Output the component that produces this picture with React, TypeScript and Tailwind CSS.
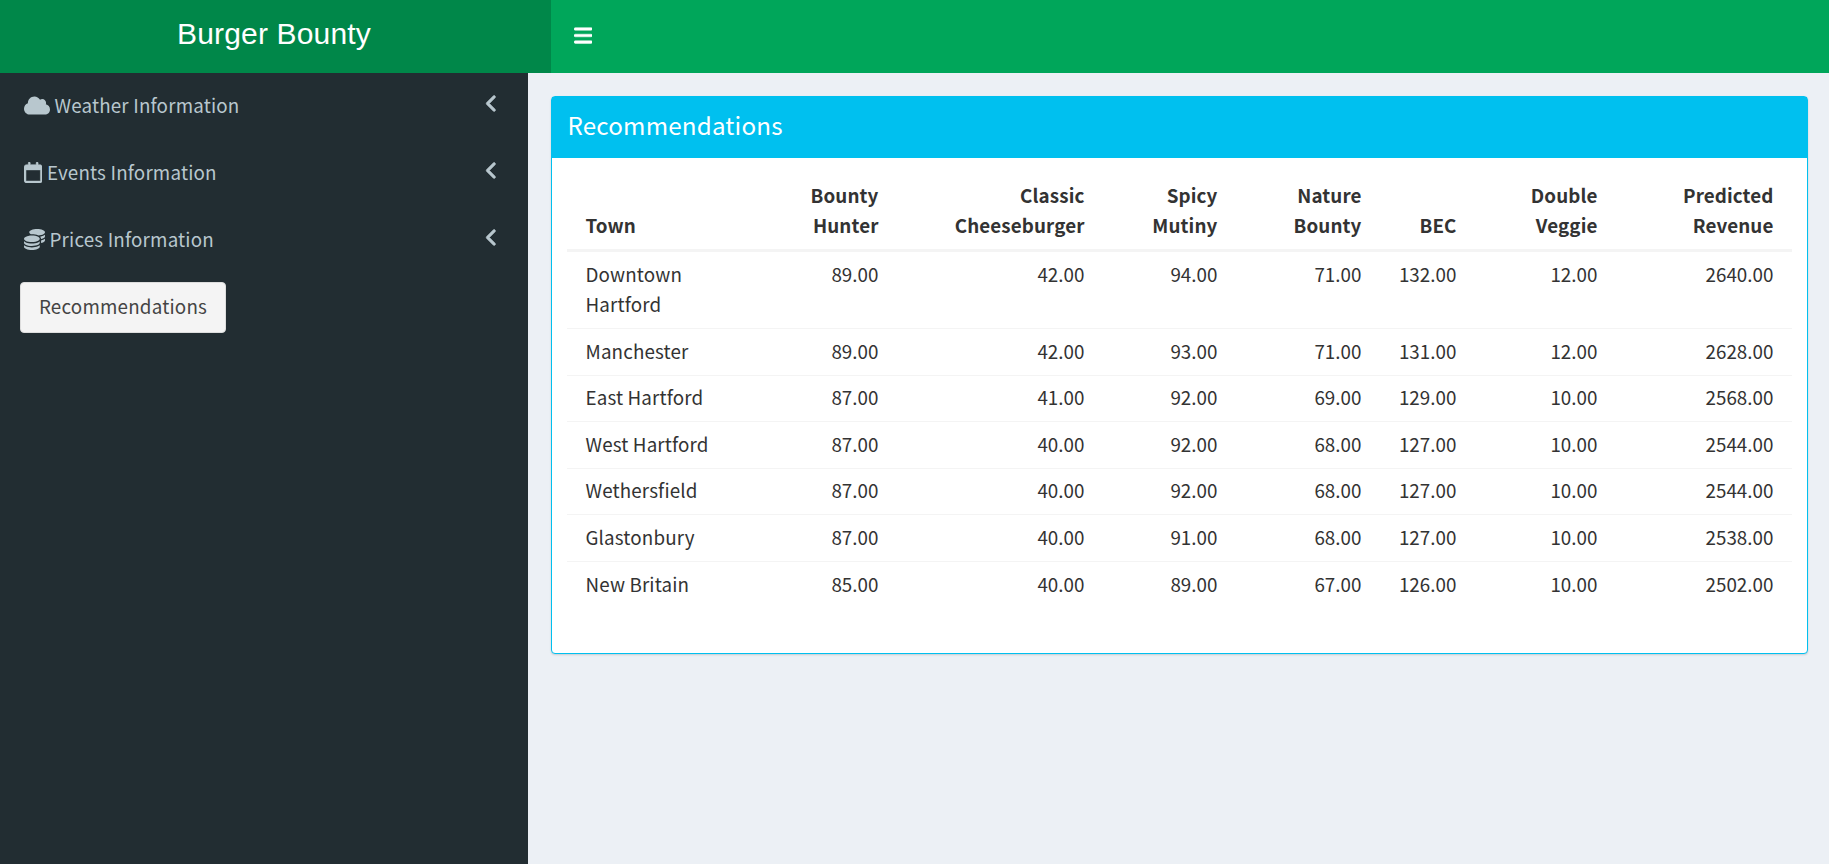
import type { ReactNode } from "react";
import { FaCloud, FaRegCalendar, FaCoins, FaAngleLeft, FaBars } from "react-icons/fa6";

const columns = [
  { lines: ["Town"], width: "w-[197px]" },
  { lines: ["Bounty", "Hunter"], width: "w-[133px]" },
  { lines: ["Classic", "Cheeseburger"], width: "w-[206px]" },
  { lines: ["Spicy", "Mutiny"], width: "w-[133px]" },
  { lines: ["Nature", "Bounty"], width: "w-[144px]" },
  { lines: ["BEC"], width: "w-[95px]" },
  { lines: ["Double", "Veggie"], width: "w-[141px]" },
  { lines: ["Predicted", "Revenue"], width: "w-[176px]" },
];

const rows: [string, number[]][] = [
  ["Downtown Hartford", [89, 42, 94, 71, 132, 12, 2640]],
  ["Manchester", [89, 42, 93, 71, 131, 12, 2628]],
  ["East Hartford", [87, 41, 92, 69, 129, 10, 2568]],
  ["West Hartford", [87, 40, 92, 68, 127, 10, 2544]],
  ["Wethersfield", [87, 40, 92, 68, 127, 10, 2544]],
  ["Glastonbury", [87, 40, 91, 68, 127, 10, 2538]],
  ["New Britain", [85, 40, 89, 67, 126, 10, 2502]],
];

function MenuItem({ icon, label }: { icon: ReactNode; label: string }) {
  return (
    <li className="flex h-[67px] items-center pb-[3px] pl-[23.5px] pr-[26px] text-[#b8c7ce]">
      <span className="mr-[5px]">{icon}</span>
      <span className="flex-1 whitespace-nowrap tracking-[0.18px]">{label}</span>
      <FaAngleLeft className="mb-[3px] size-[21px] stroke-current stroke-[16px]" />
    </li>
  );
}

function Sidebar() {
  return (
    <aside className="w-[528px] shrink-0 bg-[#222d32]">
      <ul>
        <MenuItem icon={<FaCloud className="h-[21px] w-[26px]" />} label="Weather Information" />
        <MenuItem icon={<FaRegCalendar className="h-[21px] w-[18.4px] stroke-current stroke-[12px]" />} label="Events Information" />
        <MenuItem icon={<FaCoins className="size-[21px]" />} label="Prices Information" />
      </ul>
      <button className="ml-5 mt-2 flex h-[51px] w-[206px] items-center justify-center rounded-[4px] border border-[#ddd] bg-[#f4f4f4] pb-[3px] tracking-[0.2px] text-[#444]">
        Recommendations
      </button>
    </aside>
  );
}

function RecommendationsTable() {
  return (
    <table className="w-full table-fixed border-separate border-spacing-0 leading-[30px]">
      <thead>
        <tr>
          {columns.map(({ lines, width }, i) => (
            <th
              key={lines.join(" ")}
              className={`${width} border-b-[3px] border-[#f4f4f4] px-[18.5px] pb-[9px] pt-[7px] align-bottom font-bold tracking-[0.12px] ${i === 0 ? "text-left" : "text-right"}`}
            >
              {lines.map((line) => (
                <div key={line}>{line}</div>
              ))}
            </th>
          ))}
        </tr>
      </thead>
      <tbody>
        {rows.map(([town, values], r) => (
          <tr key={town}>
            <td className={`border-[#f4f4f4] px-[18.5px] align-top tracking-[0.15px] ${r === 0 ? "pb-[9px] pt-[7px]" : "border-t pb-[9px] pt-[6.6px]"}`}>
              {town}
            </td>
            {values.map((value, i) => (
              <td
                key={i}
                className={`border-[#f4f4f4] px-[18.5px] text-right align-top tracking-[0.04px] ${r === 0 ? "pb-[9px] pt-[7px]" : "border-t pb-[9px] pt-[6.6px]"}`}
              >
                {value.toFixed(2)}
              </td>
            ))}
          </tr>
        ))}
      </tbody>
    </table>
  );
}

export default function App() {
  return (
    <div className="flex h-[864px] w-[1829px] flex-col overflow-hidden bg-[#ecf0f5] font-['Noto_Sans_CJK_SC',sans-serif] text-[18.8px] leading-[30px] text-[#333]">
      <header className="flex h-[73px] shrink-0 bg-[#00a65a] text-white">
        <div className="flex w-[551px] items-center justify-center bg-[#008749] pb-[5px] pr-[3px] font-['Liberation_Sans',sans-serif] text-[30px] tracking-[0.17px]">
          Burger Bounty
        </div>
        <button className="flex items-center pl-[23px]" aria-label="Toggle navigation">
          <FaBars className="mb-[3px] h-[21px] w-[18.4px] stroke-current stroke-[12px]" />
        </button>
      </header>
      <div className="flex flex-1">
        <Sidebar />
        <main className="flex-1 pl-[23px] pr-[21px] pt-[23px]">
          <section className="h-[558px] rounded-[4px] border border-[#00c0ef] bg-white shadow-[0_1px_2px_rgba(0,0,0,0.15)]">
            <h3 className="h-[61px] bg-[#00c0ef] pl-[15.5px] pt-[13px] text-[24.2px] leading-[30px] tracking-[0.17px] text-white">Recommendations</h3>
            <div className="px-[15px] pt-[15px]">
              <RecommendationsTable />
            </div>
          </section>
        </main>
      </div>
    </div>
  );
}
